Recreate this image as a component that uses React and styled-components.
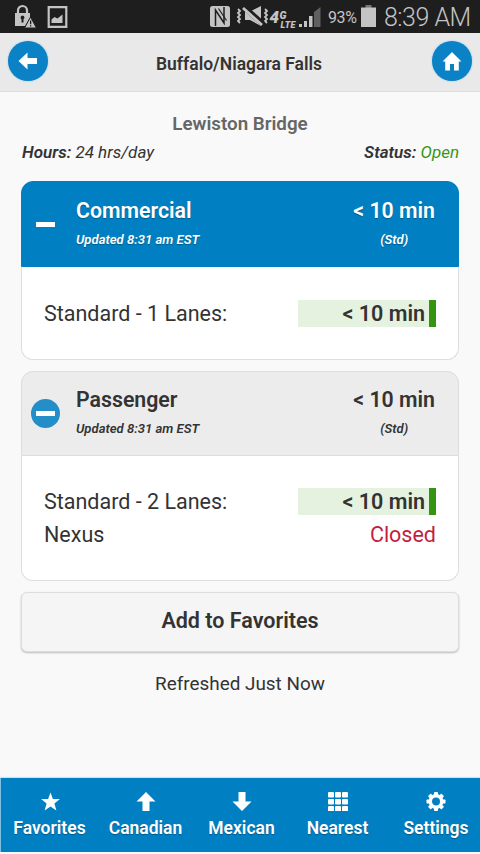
import styled, { createGlobalStyle } from "styled-components";

const GlobalStyle = createGlobalStyle`
  * {
    box-sizing: border-box;
  }
  body {
    margin: 0;
    background: #f9f9f9;
    font-family: Roboto, "Liberation Sans", sans-serif;
    color: #333;
  }
`;

function StatusIcons() {
  return (
    <StatusGroup>
      <svg width="56" height="33" viewBox="0 0 56 33" fill="#c4c4c4">
        <path
          d="M4 14v-3.5a4.500 4.500 0 0 1 9 0V14"
          fill="none"
          stroke="#c4c4c4"
          strokeWidth="2.2"
        />
        <path d="M1 13h15v5l-5 8H1z" />
        <path d="M8.500 15.500a2 2 0 0 1 1 3.700v3.300h-2v-3.300a2 2 0 0 1 1-3.700z" fill="#1e1e1e" />
        <path d="M16.500 17 22.500 28H10.500z" stroke="#1e1e1e" />
        <path d="M16 20.500h1.300v3.800H16zM16 25.200h1.300v1.400H16z" fill="#1e1e1e" />
        <path d="M34.700 7.200h17.600v19.600H34.700z" fill="none" stroke="#c4c4c4" strokeWidth="2.2" />
        <path d="M37.500 23v-3.500l3-2.500 3 1.500 5-4V23z" />
      </svg>
    </StatusGroup>
  );
}

function SignalIcons() {
  return (
    <svg width="113" height="33" viewBox="0 0 113 33" fill="#c4c4c4">
      {/* nfc */}
      <rect x="2" y="6" width="20" height="21" rx="2.5" />
      <path d="M7.500 26V10l8.500 13V7" fill="none" stroke="#1e1e1e" strokeWidth="1.500" />
      <path d="M10.500 8.500l8 12" fill="none" stroke="#1e1e1e" strokeWidth="1.200" />
      {/* muted, vibrating */}
      <path
        d="M30 9l2 2-2 2 2 2-2 2 2 2-2 2 2 2M57 9l2 2-2 2 2 2-2 2 2 2-2 2 2 2"
        fill="none"
        stroke="#c4c4c4"
        strokeWidth="1.800"
      />
      <path d="M37 11.500h5l11-5.500v20l-11-6h-5z" />
      <path d="M35 6l20 18" stroke="#1e1e1e" strokeWidth="5.500" />
      <path d="M35 8l19 17" stroke="#c4c4c4" strokeWidth="2.800" />
      <text x="61.5" y="22.500" fontSize="17" fontWeight="900" fontStyle="italic">
        4
      </text>
      <text x="71.500" y="19" fontSize="10.500" fontWeight="900" fontStyle="italic">
        G
      </text>
      <text x="72.500" y="28" fontSize="9" fontWeight="900" fontStyle="italic" textLength="15">
        LTE
      </text>
      {/* signal */}
      <path d="M91 24h3v3h-3zM96 21h3v6h-3zM101 16h3.500v11H101z" />
      <path d="M106 12l6.500-5v20H106z" fill="#606060" />
    </svg>
  );
}

function MinusIcon({ active }) {
  return (
    <Toggle $active={active}>
      <i />
    </Toggle>
  );
}

function LanePanel({ title, active, children }) {
  return (
    <Panel>
      <PanelHeader $active={active}>
        <MinusIcon active={active} />
        <PanelName>
          <h3>{title}</h3>
          <em>Updated 8:31 am EST</em>
        </PanelName>
        <PanelWait>
          <h3>&lt; 10 min</h3>
          <em>(Std)</em>
        </PanelWait>
      </PanelHeader>
      <PanelBody $active={active}>{children}</PanelBody>
    </Panel>
  );
}

const arrowPath = "M10 0 19.5 9.5H13.5V19H6.5V9.5H.5z";

const tabs = [
  {
    name: "Favorites",
    icon: <path d="M10.500.5l2.400 6.500h7l-5.500 4.400 2 7-5.900-4-5.900 4 2-7L1.100 7h7z" />,
  },
  { name: "Canadian", icon: <path d={arrowPath} /> },
  { name: "Mexican", icon: <path d={arrowPath} transform="rotate(180 10 9.5)" /> },
  {
    name: "Nearest",
    icon: [0, 7, 14].map((y) =>
      [0, 7, 14].map((x) => <rect key={x + "-" + y} x={x} y={y} width="6" height="5.5" rx="1" />)
    ),
  },
  {
    name: "Settings",
    icon: (
      <>
        <circle cx="10" cy="9.5" r="5.7" fill="none" stroke="#fff" strokeWidth="3.4" />
        {[0, 45, 90, 135, 180, 225, 270, 315].map((a) => (
          <rect
            key={a}
            x="8"
            y="0"
            width="4"
            height="4"
            rx=".8"
            transform={`rotate(${a} 10 9.5)`}
          />
        ))}
      </>
    ),
  },
];

function App() {
  return (
    <Screen>
      <GlobalStyle />
      <StatusBar>
        <StatusIcons />
        <StatusGroup>
          <SignalIcons />
          <Battery>93%</Battery>
          <svg width="16" height="33" viewBox="0 0 16 33">
            <path d="M4.500 5h6v3h-6z" fill="#777" />
            <path d="M0 7.500h15V27H0z" fill="#c4c4c4" />
          </svg>
          <Clock>8:39 AM</Clock>
        </StatusGroup>
      </StatusBar>
      <Header>
        <RoundButton>
          <svg width="20" height="18" viewBox="0 0 20 18" fill="#fff">
            <path d="M.5 9 9.500.5V6H19v6H9.500v5.500z" />
          </svg>
        </RoundButton>
        <h1>Buffalo/Niagara Falls</h1>
        <RoundButton>
          <svg width="20" height="19" viewBox="0 0 20 19" fill="#fff">
            <path d="M10 0l9.500 9.500H16.800V18.500H12V12H8v6.500H3.200V9.500H.5z" />
          </svg>
        </RoundButton>
      </Header>
      <Content>
        <Bridge>Lewiston Bridge</Bridge>
        <Info>
          <span>
            <b>Hours:</b> 24 hrs/day
          </span>
          <Status>
            <b>Status:</b> <span>Open</span>
          </Status>
        </Info>
        <LanePanel title="Commercial" active>
          <Lane>
            Standard - 1 Lanes:
            <Wait>&lt; 10 min</Wait>
          </Lane>
        </LanePanel>
        <LanePanel title="Passenger">
          <Lane>
            Standard - 2 Lanes:
            <Wait>&lt; 10 min</Wait>
          </Lane>
          <Lane>
            Nexus
            <Closed>Closed</Closed>
          </Lane>
        </LanePanel>
        <FavoriteButton>Add to Favorites</FavoriteButton>
        <Refreshed>Refreshed Just Now</Refreshed>
      </Content>
      <TabBar>
        {tabs.map((tab) => (
          <Tab key={tab.name}>
            <svg width="20" height="19" viewBox="0 0 20 19" fill="#fff">
              {tab.icon}
            </svg>
            <span>{tab.name}</span>
          </Tab>
        ))}
      </TabBar>
    </Screen>
  );
}

const Screen = styled.div`
  width: 480px;
  height: 854px;
  padding-bottom: 2px;
  display: flex;
  flex-direction: column;
  overflow: hidden;
`;

const StatusBar = styled.div`
  height: 33px;
  padding: 0 10px 0 14px;
  display: flex;
  justify-content: space-between;
  background: #1e1e1e;
  color: #c4c4c4;
`;

const StatusGroup = styled.div`
  display: flex;
  align-items: center;
`;

const Battery = styled.span`
  width: 33px;
  margin: 2px 0 0 7px;
  font-size: 16px;
  letter-spacing: -0.4px;
`;

const Clock = styled.span`
  width: 86px;
  margin: 1px 0 0 7px;
  font-size: 25px;
  font-weight: 300;
  letter-spacing: -0.5px;
  white-space: nowrap;
`;

const Header = styled.header`
  height: 59px;
  padding: 0 8px 2px;
  display: flex;
  align-items: center;
  justify-content: space-between;
  background: #e9e9e9;
  border-bottom: 1px solid #ddd;

  h1 {
    margin: 6px 0 0;
    padding-right: 2px;
    font-size: 17.5px;
    font-weight: 600;
    text-shadow: 0 1px 0 #eee;
  }
`;

const RoundButton = styled.button`
  width: 40px;
  height: 40px;
  padding: 0;
  display: grid;
  place-items: center;
  border: 0;
  border-radius: 50%;
  background: #0a82c5;
  box-shadow: 0 0 2px #8cc5e8;
`;

const Content = styled.main`
  flex: 1;
  padding: 21px 21px 0;
`;

const Bridge = styled.h2`
  margin: 0;
  font-size: 18.8px;
  line-height: 22px;
  font-weight: 600;
  text-align: center;
  color: #666;
`;

const Info = styled.div`
  margin-top: 7px;
  height: 20px;
  padding: 0 0 0 1px;
  display: flex;
  justify-content: space-between;
  font-size: 17px;
  line-height: 20px;
  font-style: italic;

  b {
    font-weight: 600;
  }
`;

const Status = styled.span`
  span {
    color: #389616;
  }
`;

const Panel = styled.section`
  margin: 19px 0 0;
  border-radius: 12px;

  & + & {
    margin-top: 11px;
  }
`;

const PanelHeader = styled.div`
  height: ${(p) => (p.$active ? "86px" : "85px")};
  padding: ${(p) => (p.$active ? "17px" : "16px")} 23px 0 9px;
  display: flex;
  border: 1px solid ${(p) => (p.$active ? "#0080c3" : "#ddd")};
  border-radius: 12px 12px 0 0;
  background: ${(p) => (p.$active ? "#0080c3" : "#ececec")};
  color: ${(p) => (p.$active ? "#fff" : "#333")};
  text-shadow: ${(p) => (p.$active ? "0 1px 1px #005a8a" : "none")};

  h3 {
    margin: 0;
    font-size: 21.3px;
    line-height: 24px;
    font-weight: 600;
  }
  em {
    display: block;
    margin-top: 9px;
    font-size: 13.1px;
    line-height: 16px;
    font-weight: 600;
  }
`;

const Toggle = styled.span`
  width: 29px;
  height: 29px;
  margin-top: 11px;
  display: grid;
  place-items: center;
  border-radius: 50%;
  background: ${(p) => (p.$active ? "transparent" : "#248ec8")};

  i {
    width: 19px;
    height: 5px;
    background: #fff;
  }
`;

const PanelName = styled.div`
  margin-left: 16px;
  flex: 1;
`;

const PanelWait = styled.div`
  text-align: center;
`;

const PanelBody = styled.div`
  padding: ${(p) => (p.$active ? "30px 22px 29px" : "29px 22px")};
  border: 1px solid #ddd;
  border-top: 0;
  border-radius: 0 0 12px 12px;
  background: #fff;
`;

const Lane = styled.div`
  height: 33px;
  display: flex;
  align-items: center;
  justify-content: space-between;
  font-size: 21.5px;
`;

const Wait = styled.span`
  width: 138px;
  height: 27px;
  padding-right: 4px;
  border-right: 7px solid #359410;
  background: #e6f2e0;
  line-height: 27px;
  font-weight: 600;
  text-align: right;
`;

const Closed = styled.span`
  color: #c41e3f;
`;

const FavoriteButton = styled.button`
  display: block;
  width: 100%;
  height: 60px;
  margin-top: 11px;
  padding: 0 0 3px;
  border: 1px solid #ddd;
  border-radius: 6px;
  background: #f5f5f5;
  box-shadow: 0 1px 2px #bbb;
  font-family: inherit;
  font-size: 21.5px;
  font-weight: 600;
  color: #333;
`;

const Refreshed = styled.p`
  margin: 20px 0 0;
  font-size: 18.9px;
  line-height: 24px;
  text-align: center;
`;

const TabBar = styled.nav`
  height: 74px;
  display: grid;
  grid-template-columns: 96px 96px 96px 96px 101px;
  border-left: 1px solid #7fc0e2;
  background: #0080c3;
  box-shadow: 0 -1px 1px #cbe4f2;
`;

const Tab = styled.div`
  padding: 14px 0 0 1px;
  display: flex;
  flex-direction: column;
  align-items: center;
  color: #fff;
  font-size: 17.5px;
  line-height: 22px;
  font-weight: 600;
  text-shadow: 0 1px 1px #005a8a;

  span {
    margin-top: 6px;
  }
`;

export default App;
